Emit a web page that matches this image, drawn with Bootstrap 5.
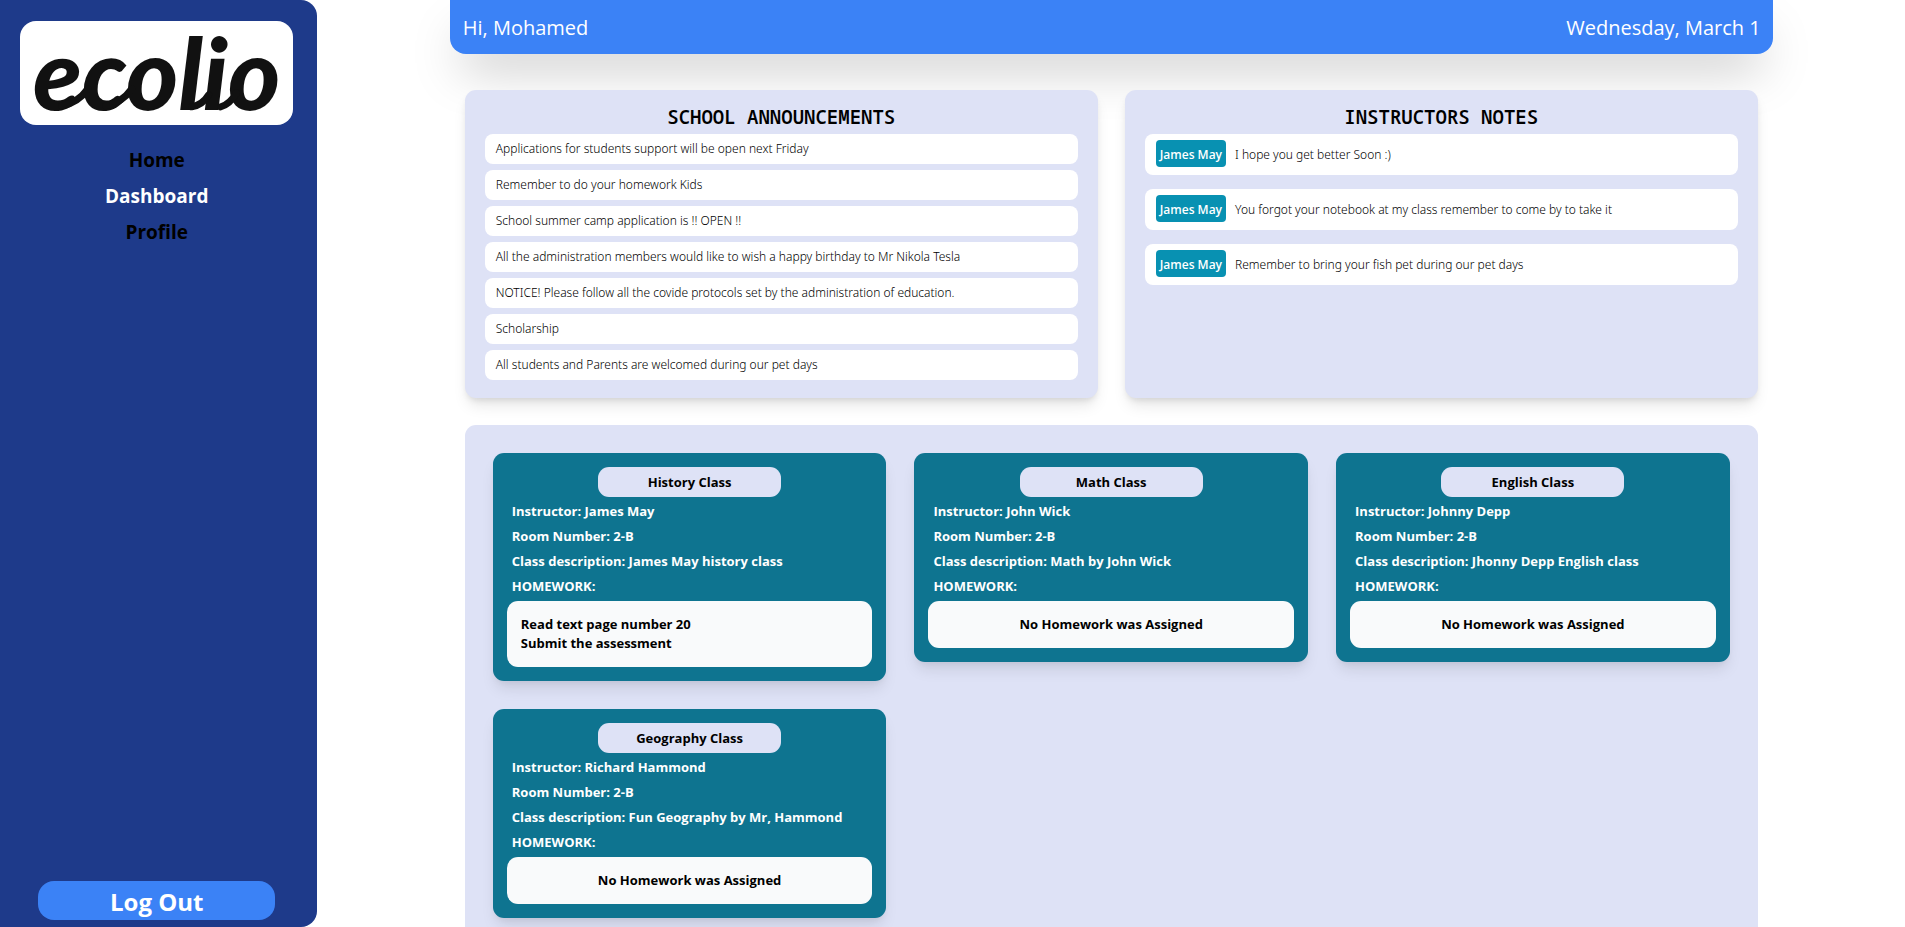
<!DOCTYPE html>
<html lang="en">
<head>
<meta charset="utf-8">
<meta name="viewport" content="width=device-width, initial-scale=1">
<title>Ecolio - Dashboard</title>
<link href="https://cdn.jsdelivr.net/npm/bootstrap@5.3.0/dist/css/bootstrap.min.css" rel="stylesheet">
<style>
  body { font-family: "Open Sans", "Noto Sans", sans-serif; color: #000; background: #fff; }
  .sidebar { background: #1e3a8a; border-radius: 0 16px 16px 0; padding: 21px 24px 7px 20px; }
  .brand-box { background: #fff; border-radius: 16px; }
  .brand-box svg { display: block; width: 100%; overflow: visible; }
  .side-nav { padding-top: 21px; }
  .side-link { font-size: 19px; line-height: 28px; font-weight: 700; color: #000; text-decoration: none; }
  .side-link.active { color: #fff; }
  .logout { background: #3b82f6; color: #fff; font-size: 24px; line-height: 37px; font-weight: 700; border: 0; border-radius: 16px; margin: 0 18px; padding: 2px 0 0; }
  .content-pane { overflow-y: auto; scrollbar-width: none; }
  .topbar { background: #3b82f6; color: #fff; font-size: 20px; font-weight: 500; line-height: 28px; padding: 14px 12px 12px 13px; border-radius: 0 0 16px 16px; box-shadow: 0 25px 50px -12px rgba(0,0,0,.25); }
  .boards { padding: 36px 15px 27px; gap: 27px; }
  .board { flex: 1 1 0; min-width: 0; background: #dee2f6; border-radius: 11px; padding: 13px 20px 18px; box-shadow: 0 10px 15px -3px rgba(0,0,0,.1), 0 4px 6px -2px rgba(0,0,0,.1); }
  .board-title { font-family: "Noto Sans Mono", "DejaVu Sans Mono", monospace; font-size: 19px; line-height: 28px; font-weight: 600; margin: 0 0 3px; text-align: center; }
  .entry { background: #fff; border-radius: 8px; font-family: "Noto Sans", "Open Sans", sans-serif; font-size: 12px; font-weight: 300; line-height: 18px; padding: 6px 11px; color: #000; }
  .note { padding: 6px 11px 8px; }
  .author { background: #0891b2; color: #fff; border-radius: 4px; font-family: "Open Sans", sans-serif; font-weight: 600; padding: 6px 4px 3px; margin-right: 9px; }
  .note-text { padding-top: 3px; }
  .classes { background: #dee2f6; border-radius: 11px 11px 0 0; margin: 0 15px; padding: 28px; display: grid; grid-template-columns: repeat(3, minmax(0, 1fr)); gap: 28px; align-items: start; }
  .class-card { background: #0e7490; color: #fff; border-radius: 11px; padding: 14px; font-size: 13px; font-weight: 700; box-shadow: 0 10px 15px -3px rgba(0,0,0,.1), 0 4px 6px -2px rgba(0,0,0,.05); }
  .class-name { background: #dee2f6; color: #000; border-radius: 11px; font-size: 13px; font-weight: 700; line-height: 20px; padding: 5px 0; margin: 0 auto 2px; }
  .class-info { line-height: 25px; padding: 0 5px; margin: 0; }
  .homework { background: #f9fafb; color: #000; border-radius: 11px; line-height: 19px; padding: 14px; margin-top: 2px; }
</style>
</head>
<body>
<div class="d-flex vh-100">
  <aside class="sidebar col-2 d-flex flex-column">
    <div class="brand-box">
      <svg viewBox="0 0 274 104" role="img" aria-label="ecolio">
        <text x="13" y="89" font-family="Lato, sans-serif" font-size="100" font-weight="900" font-style="italic" fill="#111">ecolio</text>
        <g fill="none" stroke="#111" stroke-width="7" stroke-linecap="round">
          <path d="M42 85 Q58 82 68 68"/>
          <path d="M86 85 Q102 82 112 68"/>
          <path d="M172 86 Q183 84 189 74"/>
          <path d="M201 86 Q210 84 217 72"/>
        </g>
      </svg>
    </div>
    <nav class="side-nav d-flex flex-column align-items-center gap-2">
      <a class="side-link" href="#">Home</a>
      <a class="side-link active" href="#" aria-current="page">Dashboard</a>
      <a class="side-link" href="#">Profile</a>
    </nav>
    <button class="logout mt-auto" type="button">Log Out</button>
  </aside>

  <main class="content-pane col-10">
    <div class="row g-0">
      <div class="col-10 offset-1">
        <header class="topbar d-flex justify-content-between">
          <span>Hi, Mohamed</span>
          <span>Wednesday, March 1</span>
        </header>

        <div class="boards d-flex">
          <section class="board">
            <h2 class="board-title">SCHOOL ANNOUNCEMENTS</h2>
            <ul class="list-unstyled d-grid m-0" style="gap:6px">
              <li class="entry">Applications for students support will be open next Friday</li>
              <li class="entry">Remember to do your homework Kids</li>
              <li class="entry">School summer camp application is !! OPEN !!</li>
              <li class="entry">All the administration members would like to wish a happy birthday to Mr Nikola Tesla</li>
              <li class="entry">NOTICE! Please follow all the covide protocols set by the administration of education.</li>
              <li class="entry">Scholarship</li>
              <li class="entry">All students and Parents are welcomed during our pet days</li>
            </ul>
          </section>
          <section class="board">
            <h2 class="board-title">INSTRUCTORS NOTES</h2>
            <ul class="list-unstyled d-grid m-0" style="gap:14px">
              <li class="entry note d-flex"><span class="author">James May</span><span class="note-text align-self-center">I hope you get better Soon :)</span></li>
              <li class="entry note d-flex"><span class="author">James May</span><span class="note-text align-self-center">You forgot your notebook at my class remember to come by to take it</span></li>
              <li class="entry note d-flex"><span class="author">James May</span><span class="note-text align-self-center">Remember to bring your fish pet during our pet days</span></li>
            </ul>
          </section>
        </div>

        <section class="classes">
          <article class="class-card">
            <h3 class="class-name w-50 text-center">History Class</h3>
            <p class="class-info">Instructor: James May</p>
            <p class="class-info">Room Number: 2-B</p>
            <p class="class-info">Class description: James May history class</p>
            <p class="class-info">HOMEWORK:</p>
            <div class="homework">Read text page number 20<br>Submit the assessment</div>
          </article>
          <article class="class-card">
            <h3 class="class-name w-50 text-center">Math Class</h3>
            <p class="class-info">Instructor: John Wick</p>
            <p class="class-info">Room Number: 2-B</p>
            <p class="class-info">Class description: Math by John Wick</p>
            <p class="class-info">HOMEWORK:</p>
            <div class="homework text-center">No Homework was Assigned</div>
          </article>
          <article class="class-card">
            <h3 class="class-name w-50 text-center">English Class</h3>
            <p class="class-info">Instructor: Johnny Depp</p>
            <p class="class-info">Room Number: 2-B</p>
            <p class="class-info">Class description: Jhonny Depp English class</p>
            <p class="class-info">HOMEWORK:</p>
            <div class="homework text-center">No Homework was Assigned</div>
          </article>
          <article class="class-card">
            <h3 class="class-name w-50 text-center">Geography Class</h3>
            <p class="class-info">Instructor: Richard Hammond</p>
            <p class="class-info">Room Number: 2-B</p>
            <p class="class-info">Class description: Fun Geography by Mr, Hammond</p>
            <p class="class-info">HOMEWORK:</p>
            <div class="homework text-center">No Homework was Assigned</div>
          </article>
        </section>
      </div>
    </div>
  </main>
</div>
<script src="https://cdn.jsdelivr.net/npm/bootstrap@5.3.0/dist/js/bootstrap.bundle.min.js"></script>
</body>
</html>
